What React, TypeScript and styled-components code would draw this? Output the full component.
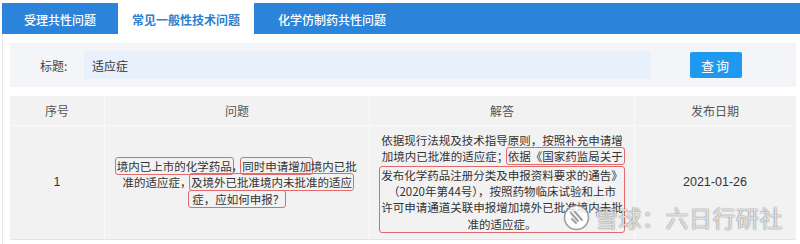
import React from "react";
import styled, { createGlobalStyle } from "styled-components";

const Global = createGlobalStyle`
  html, body { margin: 0; padding: 0; background: #ffffff; }
  body { font-family: "Noto Sans CJK SC", "Noto Sans", sans-serif; color: #333; }
`;

const Page = styled.div`
  position: relative;
  width: 800px;
  height: 244px;
  padding: 3px 0 0 2px;
  box-sizing: border-box;
  overflow: hidden;
`;

const TabBar = styled.div`
  display: flex;
  height: 31px;
  background: #2b84d9;
`;

const Tab = styled.div<{ $active?: boolean; $w: number }>`
  width: ${(p) => p.$w}px;
  display: flex;
  align-items: center;
  justify-content: center;
  font-size: 12px;
  font-weight: ${(p) => (p.$active ? 700 : 500)};
  color: ${(p) => (p.$active ? "#2f7fcf" : "#ffffff")};
  background: ${(p) => (p.$active ? "#ffffff" : "transparent")};
  padding-top: 1px;
  box-sizing: border-box;
`;

const Content = styled.div`
  border-left: 1px solid #e8e8e8;
  padding: 9px 4px 0 7px;
  height: 210px;
  box-sizing: border-box;
`;

const SearchPanel = styled.div`
  display: flex;
  align-items: center;
  height: 44px;
  background: #f3f5f9;
  padding-left: 30px;
`;

const Label = styled.div`
  width: 44px;
  font-size: 12px;
  color: #444;
`;

const Input = styled.div`
  width: 567px;
  height: 28px;
  background: #e8f0fb;
  display: flex;
  align-items: center;
  padding-left: 8px;
  box-sizing: border-box;
  font-size: 12px;
  color: #333;
`;

const Button = styled.div`
  margin-left: 39px;
  width: 52px;
  height: 26px;
  border-radius: 2px;
  background: #1f98f0;
  color: #ffffff;
  font-size: 13px;
  letter-spacing: 2px;
  display: flex;
  align-items: center;
  justify-content: center;
`;

const Table = styled.div`
  margin-top: 9px;
  display: grid;
  grid-template-columns: 95px 265px 265px 160px;
  background: #f2f2f2;
`;

const HeadCell = styled.div<{ $last?: boolean }>`
  height: 30px;
  display: flex;
  align-items: center;
  justify-content: center;
  font-size: 12px;
  color: #555;
  border-right: ${(p) => (p.$last ? "none" : "1px solid #fafafa")};
  border-bottom: 1px solid #fafafa;
  box-sizing: border-box;
`;

const Cell = styled.div<{ $last?: boolean }>`
  height: 114px;
  display: flex;
  flex-direction: column;
  align-items: center;
  justify-content: center;
  font-size: 11.5px;
  line-height: 16.4px;
  color: #333;
  text-align: center;
  border-right: ${(p) => (p.$last ? "none" : "1px solid #fafafa")};
  border-bottom: 1px solid #e4e4e4;
  box-sizing: border-box;
`;

const NumText = styled.div`
  font-size: 12.5px;
  font-family: "Liberation Sans", "Noto Sans CJK SC", sans-serif;
  color: #333;
`;

const Para = styled.div`
  white-space: nowrap;
`;

const HL = styled.span`
  border: 1.5px solid #e26a6a;
  border-radius: 3px;
  padding: 0 1px;
  margin: 0 -2.5px;
`;

const BoxBlock = styled.div`
  border: 1.5px solid #e26a6a;
  border-radius: 3px;
  width: 246px;
  box-sizing: border-box;
  white-space: nowrap;
  margin-top: 1px;
`;

const Watermark = styled.div`
  position: absolute;
  left: 563px;
  top: 203px;
  display: flex;
  align-items: center;
  gap: 5px;
  font-size: 23px;
  line-height: 28px;
  color: rgba(255, 255, 255, 0.8);
  text-shadow: 0 0 1px rgba(0, 0, 0, 0.55), 0 0 2px rgba(0, 0, 0, 0.25);
  letter-spacing: 0.5px;
  pointer-events: none;
`;

const Logo = () => (
  <svg width="27" height="27" viewBox="0 0 27 27">
    <circle cx="13.5" cy="13.5" r="12" fill="rgba(255,255,255,0.8)" stroke="rgba(110,110,110,0.65)" strokeWidth="1.6" />
    <path d="M8 9 L15 17 M12 8 L19 16 M9 15 L13 19" stroke="rgba(110,110,110,0.65)" strokeWidth="2" fill="none" strokeLinecap="round" />
  </svg>
);

export default function App() {
  return (
    <>
      <Global />
      <Page>
        <TabBar>
          <Tab $w={116}>受理共性问题</Tab>
          <Tab $w={136} $active>常见一般性技术问题</Tab>
          <Tab $w={156}>化学仿制药共性问题</Tab>
        </TabBar>
        <Content>
          <SearchPanel>
            <Label>标题:</Label>
            <Input>适应症</Input>
            <Button>查询</Button>
          </SearchPanel>
          <Table>
            <HeadCell>序号</HeadCell>
            <HeadCell>问题</HeadCell>
            <HeadCell>解答</HeadCell>
            <HeadCell $last>发布日期</HeadCell>
            <Cell>
              <NumText>1</NumText>
            </Cell>
            <Cell>
              <Para>
                <HL>境内已上市的化学药品</HL>，<HL>同时申请增加</HL>境内已批
                <br />
                准的适应症，<HL>及境外已批准境内未批准的适应</HL>
                <br />
                <HL>&nbsp;症，应如何申报？</HL>
              </Para>
            </Cell>
            <Cell>
              <Para>
                依据现行法规及技术指导原则，按照补充申请增
                <br />
                加境内已批准的适应症；<HL>依据《国家药监局关于</HL>
              </Para>
              <BoxBlock>
                发布化学药品注册分类及申报资料要求的通告》
                <br />
                （2020年第44号），按照药物临床试验和上市
                <br />
                许可申请通道关联申报增加境外已批准境内未批
                <br />
                准的适应症。
              </BoxBlock>
            </Cell>
            <Cell $last>
              <NumText>2021-01-26</NumText>
            </Cell>
          </Table>
        </Content>
        <Watermark>
          <Logo />
          <span>雪球：六日行研社</span>
        </Watermark>
      </Page>
    </>
  );
}
